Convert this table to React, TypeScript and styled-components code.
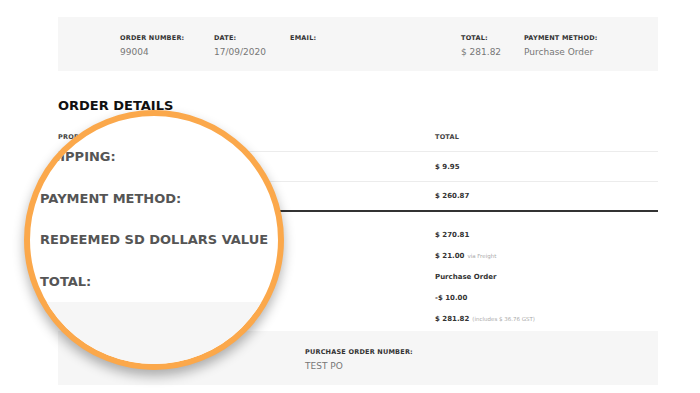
import React from "react";
import styled, { createGlobalStyle } from "styled-components";

const GlobalStyle = createGlobalStyle`
  body { margin: 0; background: #fff; font-family: "DejaVu Sans", "Liberation Sans", sans-serif; }
`;

const Page = styled.div`
  position: relative;
  width: 700px;
  height: 393px;
  overflow: hidden;
  box-sizing: border-box;
  padding: 17px 0 0 58px;
`;

const Content = styled.div`
  width: 600px;
`;

const Summary = styled.div`
  display: grid;
  grid-template-columns: 94px 76px 171px 63px 1fr;
  height: 54px;
  box-sizing: border-box;
  padding: 17px 0 0 62px;
  background: #f6f6f6;
`;

const Field = styled.div`
  display: flex;
  flex-direction: column;
`;

const Label = styled.div`
  font-size: 6.5px;
  line-height: 8px;
  font-weight: 700;
  color: #333;
  letter-spacing: .2px;
  text-transform: uppercase;
  white-space: nowrap;
`;

const Value = styled.div`
  margin-top: 4px;
  font-size: 9px;
  line-height: 12px;
  color: #777;
  white-space: nowrap;
`;

const Heading = styled.h2`
  margin: 27px 0 8px;
  font-size: 13px;
  line-height: 16px;
  font-weight: 700;
  color: #111;
`;

const Row = styled.div<{ dark?: boolean }>`
  display: grid;
  grid-template-columns: 377px 1fr;
  align-items: center;
  height: 30px;
  box-sizing: border-box;
  border-bottom: ${({ dark }) => (dark ? "2px solid #333" : "1px solid #ececec")};
`;

const HeadCell = styled.div`
  font-size: 6.5px;
  font-weight: 700;
  color: #444;
  letter-spacing: .2px;
`;

const Amount = styled.div`
  font-size: 7px;
  font-weight: 700;
  color: #333;
  white-space: nowrap;
`;

const Note = styled.span`
  margin-left: 3px;
  font-size: 5.5px;
  font-weight: 400;
  color: #aaa;
`;

const Totals = styled.div`
  padding-top: 12px;
`;

const TotalRow = styled.div`
  display: grid;
  grid-template-columns: 377px 1fr;
  align-items: center;
  height: 21px;
`;

const PoBox = styled.div`
  margin-top: 2px;
  height: 54px;
  box-sizing: border-box;
  padding: 17px 0 0 247px;
  background: #f6f6f6;
`;

const Lens = styled.div`
  position: absolute;
  left: 24px;
  top: 110px;
  width: 260px;
  height: 260px;
  box-sizing: border-box;
  border: 6px solid #fba84b;
  border-radius: 50%;
  overflow: hidden;
  background: #fff;
  box-shadow: 0 6px 12px rgba(0, 0, 0, .3);
  display: flex;
  flex-direction: column;
  padding-top: 20px;
`;

const LensLabel = styled.div`
  height: 41.5px;
  line-height: 41.5px;
  padding-left: 10px;
  font-size: 13px;
  font-weight: 700;
  color: #555;
  white-space: nowrap;
`;

const LensFooter = styled.div`
  flex: 1;
  background: #f6f6f6;
`;

const summary = [
  { label: "Order number:", value: "99004" },
  { label: "Date:", value: "17/09/2020" },
  { label: "Email:", value: "" },
  { label: "Total:", value: "$ 281.82" },
  { label: "Payment method:", value: "Purchase Order" },
];

const totals: { amount: string; note?: string }[] = [
  { amount: "$ 270.81" },
  { amount: "$ 21.00", note: "via Freight" },
  { amount: "Purchase Order" },
  { amount: "-$ 10.00" },
  { amount: "$ 281.82", note: "(includes $ 36.76 GST)" },
];

export default function App() {
  return (
    <>
      <GlobalStyle />
      <Page>
        <Content>
          <Summary>
            {summary.map((f) => (
              <Field key={f.label}>
                <Label>{f.label}</Label>
                <Value>{f.value}</Value>
              </Field>
            ))}
          </Summary>

          <Heading>ORDER DETAILS</Heading>

          <Row>
            <HeadCell>PRODUCT</HeadCell>
            <HeadCell>TOTAL</HeadCell>
          </Row>
          <Row>
            <span />
            <Amount>$ 9.95</Amount>
          </Row>
          <Row dark>
            <span />
            <Amount>$ 260.87</Amount>
          </Row>

          <Totals>
            {totals.map((t) => (
              <TotalRow key={t.amount}>
                <span />
                <Amount>
                  {t.amount}
                  {t.note && <Note>{t.note}</Note>}
                </Amount>
              </TotalRow>
            ))}
          </Totals>

          <PoBox>
            <Label>Purchase order number:</Label>
            <Value>TEST PO</Value>
          </PoBox>
        </Content>

        <Lens>
          <LensLabel>SHIPPING:</LensLabel>
          <LensLabel>PAYMENT METHOD:</LensLabel>
          <LensLabel>REDEEMED SD DOLLARS VALUE</LensLabel>
          <LensLabel>TOTAL:</LensLabel>
          <LensFooter />
        </Lens>
      </Page>
    </>
  );
}
